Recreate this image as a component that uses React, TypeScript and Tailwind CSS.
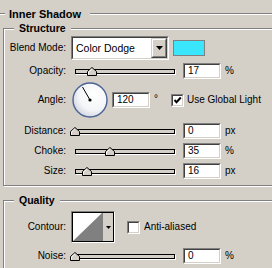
import React from 'react';

// classic win98-ish dialog: face #d4d0c8, shadow #808080, dark #404040

function EtchedLine({ className = '' }: { className?: string }) {
  return <div className={`h-0 border-t border-b border-t-[#808080] border-b-white ${className}`} />;
}

function Sunken({ className = '', children }: { className?: string; children?: React.ReactNode }) {
  return (
    <div className={`border border-t-[#808080] border-l-[#808080] border-b-white border-r-white ${className}`}>
      <div className="h-full border border-t-[#404040] border-l-[#404040] border-b-[#d4d0c8] border-r-[#d4d0c8] bg-white">
        {children}
      </div>
    </div>
  );
}

function NumberField({ value, className = '' }: { value: string; className?: string }) {
  return (
    <Sunken className={`w-[38px] h-[16px] shrink-0 ${className}`}>
      <div className="pl-[3px] leading-[12px]">{value}</div>
    </Sunken>
  );
}

function Thumb() {
  return (
    <svg width="10" height="9" viewBox="0 0 10 9">
      <polygon points="0.5,8.5 0.5,4.5 5,0.5 9.5,4.5 9.5,8.5" fill="#d4d0c8" stroke="#000" />
      <polyline points="1.5,7.5 1.5,5 5,1.8" fill="none" stroke="#fff" />
    </svg>
  );
}

function Slider({ pos, className = '' }: { pos: number; className?: string }) {
  return (
    <div className={`relative w-[110px] h-[16px] flex items-center shrink-0 ${className}`}>
      <div className="mx-[5px] flex-1 h-[5px] border border-black bg-[#d4d0c8] shadow-[1px_1px_0_#fff]" />
      <div className="absolute top-[4px] flex" style={{ left: pos }}>
        <Thumb />
      </div>
    </div>
  );
}

function Checkbox({ checked, className = '' }: { checked?: boolean; className?: string }) {
  return (
    <Sunken className={`w-[13px] h-[13px] shrink-0 ${className}`}>
      {checked && (
        <svg width="9" height="9" viewBox="0 0 9 9" className="block">
          <path d="M1.5 4 L3.5 6.2 L7.8 1.5" fill="none" stroke="#000" strokeWidth="2" />
        </svg>
      )}
    </Sunken>
  );
}

function Dial() {
  // 120 deg, pointer toward upper left
  const r = 15;
  const x2 = 18 - 0.5 * r;
  const y2 = 18 - 0.866 * r;
  return (
    <svg width="36" height="36" viewBox="0 0 36 36" className="shrink-0">
      <defs>
        <radialGradient id="dialg" cx="0.62" cy="0.35" r="0.75">
          <stop offset="0" stopColor="#ffffff" />
          <stop offset="0.6" stopColor="#f4f5f8" />
          <stop offset="1" stopColor="#c9cedb" />
        </radialGradient>
      </defs>
      <circle cx="18" cy="18" r="17" fill="url(#dialg)" stroke="#4c6394" strokeWidth="1.4" />
      <line x1="18" y1="18" x2={x2} y2={y2} stroke="#000" strokeWidth="1" />
      <circle cx="18" cy="18" r="1.6" fill="#000" />
    </svg>
  );
}

function GroupBox({ title, className = '', children }: { title: string; className?: string; children?: React.ReactNode }) {
  return (
    <div className={`ml-[3px] w-[300px] flex flex-col border border-[#808080] shadow-[inset_1px_1px_0_#fff,1px_1px_0_#fff] ${className}`}>
      <span className="-mt-[8px] ml-[10px] px-[5px] self-start bg-[#d4d0c8] font-bold text-[10.5px] leading-[14px]">
        {title}
      </span>
      {children}
    </div>
  );
}

function Label({ children }: { children: React.ReactNode }) {
  return <span className="w-[62px] shrink-0 text-right whitespace-nowrap">{children}</span>;
}

function SliderRow({ label, pos, value, unit, className = '' }: { label: string; pos: number; value: string; unit: string; className?: string }) {
  return (
    <div className={`flex items-center h-[16px] ${className}`}>
      <Label>{label}</Label>
      <Slider pos={pos} className="ml-[4px]" />
      <NumberField value={value} className="ml-[3px]" />
      <span className="ml-[4px]">{unit}</span>
    </div>
  );
}

export default function App() {
  return (
    <div className="w-[272px] h-[268px] overflow-hidden bg-[#d4d0c8] text-black text-[10px] leading-[12px] font-['Liberation_Sans',Arial,sans-serif] pt-[8px]">
      <div className="flex items-center h-[12px]">
        <EtchedLine className="w-[5px]" />
        <span className="ml-[4px] mr-[9px] font-bold text-[11px] whitespace-nowrap">Inner Shadow</span>
        <EtchedLine className="flex-1" />
      </div>

      <GroupBox title="Structure" className="mt-[8px] h-[158px]">
        <div className="flex items-center h-[24px] mt-[1px]">
          <Label>Blend Mode:</Label>
          <Sunken className="ml-[5px] w-[98px] h-[24px] shrink-0">
            <div className="flex h-full items-center">
              <span className="pl-[3px] flex-1 text-[10.5px]">Color Dodge</span>
              <div className="h-full w-[16px] border border-t-[#d4d0c8] border-l-[#d4d0c8] border-b-[#404040] border-r-[#404040]">
                <div className="h-full flex items-center justify-center border border-t-white border-l-white border-b-[#808080] border-r-[#808080] bg-[#d4d0c8]">
                  <svg width="7" height="4" viewBox="0 0 7 4">
                    <path d="M0 0h7l-3.5 4z" fill="#000" />
                  </svg>
                </div>
              </div>
            </div>
          </Sunken>
          <div className="ml-[4px] w-[32px] h-[16px] bg-[#3ae6fb] border border-[#808080]" />
        </div>

        <SliderRow label="Opacity:" pos={17} value="17" unit="%" className="mt-[3px]" />

        <div className="flex items-center h-[36px] mt-[3px]">
          <Label>Angle:</Label>
          <div className="ml-[6px] flex">
            <Dial />
          </div>
          <NumberField value="120" className="ml-[4px]" />
          <span className="ml-[4px] self-start mt-[11px]">°</span>
          <Checkbox checked className="ml-[13px]" />
          <span className="ml-[3px] whitespace-nowrap">Use Global Light</span>
        </div>

        <SliderRow label="Distance:" pos={0} value="0" unit="px" className="mt-[5px]" />
        <SliderRow label="Choke:" pos={35} value="35" unit="%" className="mt-[4px]" />
        <SliderRow label="Size:" pos={12} value="16" unit="px" className="mt-[4px]" />
      </GroupBox>

      <GroupBox title="Quality" className="mt-[14px] h-[100px]">
        <div className="flex items-center h-[32px] mt-[4px]">
          <Label>Contour:</Label>
          <div className="ml-[5px] w-[44px] h-[32px] shrink-0 border border-t-[#808080] border-l-[#808080] border-b-white border-r-white">
            <div className="h-full flex border border-black">
              <svg width="29" height="28" viewBox="0 0 29 28" className="block">
                <rect width="29" height="28" fill="#fff" />
                <polygon points="0,28 29,0 29,28" fill="#808080" />
              </svg>
              <div className="flex-1 flex items-center justify-center border-l border-[#808080] bg-[#d4d0c8]">
                <svg width="5" height="3" viewBox="0 0 5 3">
                  <path d="M0 0h5l-2.5 3z" fill="#000" />
                </svg>
              </div>
            </div>
          </div>
          <Checkbox className="ml-[12px]" />
          <span className="ml-[4px] whitespace-nowrap">Anti-aliased</span>
        </div>

        <SliderRow label="Noise:" pos={0} value="0" unit="%" className="mt-[5px]" />
      </GroupBox>
    </div>
  );
}
